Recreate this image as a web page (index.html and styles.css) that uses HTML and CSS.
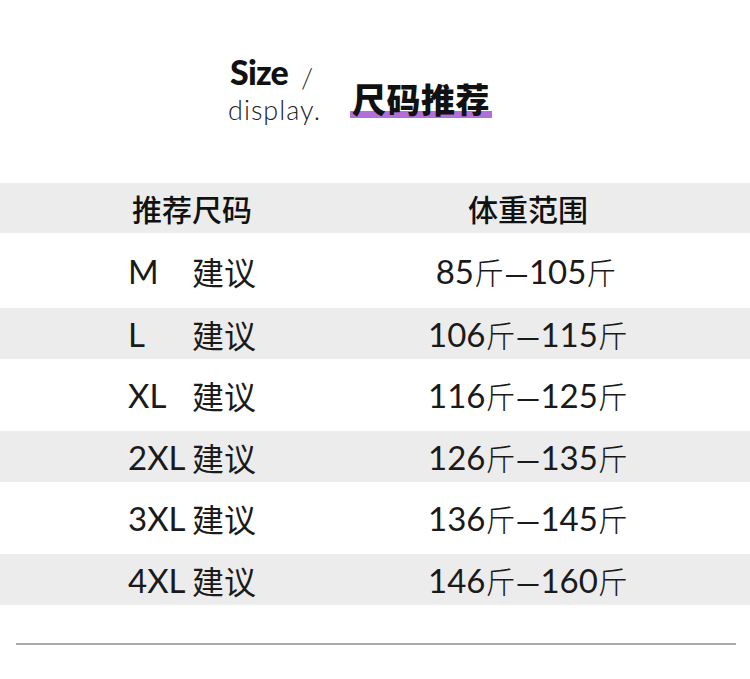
FILE: index.html
```html
<!DOCTYPE html>
<html lang="zh">
<head>
<meta charset="utf-8">
<title>尺码推荐</title>
<link rel="stylesheet" href="styles.css">
</head>
<body>
<div class="page">
  <header class="title">
    <div class="title-en">
      <div class="size">Size<span class="slash">/</span></div>
      <div class="display">display.</div>
    </div>
    <h1 class="title-cn">尺码推荐</h1>
  </header>

  <div class="table">
    <div class="row head">
      <div class="col-left head-cell">推荐尺码</div>
      <div class="col-right head-cell">体重范围</div>
    </div>
    <div class="row white first">
      <div class="col-left"><span class="sz">M</span><span class="cn">建议</span></div>
      <div class="col-right">85<span class="jin">斤</span><span class="dash">—</span>105<span class="jin">斤</span></div>
    </div>
    <div class="row gray">
      <div class="col-left"><span class="sz">L</span><span class="cn">建议</span></div>
      <div class="col-right">106<span class="jin">斤</span><span class="dash">—</span>115<span class="jin">斤</span></div>
    </div>
    <div class="row white">
      <div class="col-left"><span class="sz">XL</span><span class="cn">建议</span></div>
      <div class="col-right">116<span class="jin">斤</span><span class="dash">—</span>125<span class="jin">斤</span></div>
    </div>
    <div class="row gray">
      <div class="col-left"><span class="sz">2XL</span><span class="cn">建议</span></div>
      <div class="col-right">126<span class="jin">斤</span><span class="dash">—</span>135<span class="jin">斤</span></div>
    </div>
    <div class="row white">
      <div class="col-left"><span class="sz">3XL</span><span class="cn">建议</span></div>
      <div class="col-right">136<span class="jin">斤</span><span class="dash">—</span>145<span class="jin">斤</span></div>
    </div>
    <div class="row gray">
      <div class="col-left"><span class="sz">4XL</span><span class="cn">建议</span></div>
      <div class="col-right">146<span class="jin">斤</span><span class="dash">—</span>160<span class="jin">斤</span></div>
    </div>
  </div>

  <div class="rule"></div>
</div>
</body>
</html>
```

FILE: styles.css
```css
html, body {
  margin: 0;
  padding: 0;
  background: #ffffff;
}

.page {
  width: 750px;
  height: 679px;
  overflow: hidden;
  color: #111111;
  font-family: "Lato", "Noto Sans CJK SC", sans-serif;
}

.title {
  display: flex;
  align-items: flex-start;
  padding: 53px 0 0 228px;
  height: 183px;
  box-sizing: border-box;
}

.title-en {
  display: flex;
  flex-direction: column;
  width: 122px;
}

.size {
  padding-left: 2px;
  font-family: "Lato", sans-serif;
  font-weight: 900;
  font-size: 34px;
  line-height: 38px;
  letter-spacing: -0.8px;
  color: #111;
}

.slash {
  font-weight: 300;
  font-size: 28px;
  margin-left: 13px;
  color: #333;
  position: relative;
  top: 3px;
}

.display {
  margin-top: 3px;
  font-family: "Lato", sans-serif;
  font-weight: 300;
  font-size: 27px;
  line-height: 28px;
  color: #222;
  letter-spacing: 1px;
}

.title-cn {
  margin: 29px 0 0 0;
  font-family: "Noto Sans CJK SC", sans-serif;
  font-weight: 900;
  font-size: 34px;
  line-height: 34px;
  letter-spacing: 0.5px;
  color: #111;
  padding: 0 2px 2px 2px;
  background: linear-gradient(#b26fd9, #b26fd9) no-repeat left bottom / 100% 7px;
}

.table {
  display: flex;
  flex-direction: column;
}

.row {
  display: grid;
  grid-template-columns: 128px 300px 1fr;
  align-items: center;
  font-size: 33px;
  font-weight: 400;
  color: #1a1a1a;
}

.row.head {
  height: 50px;
  background: #ececec;
}

.row.white {
  height: 72px;
}

.row.white.first {
  height: 75px;
}

.row.gray {
  height: 51px;
  background: #ececec;
}

.col-left {
  grid-column: 2;
  display: flex;
  align-items: center;
}

.col-right {
  grid-column: 3;
  width: 196px;
  text-align: center;
  white-space: nowrap;
  justify-self: start;
}

.head-cell {
  font-family: "Noto Sans CJK SC", sans-serif;
  font-weight: 500;
  font-size: 30px;
  color: #111;
}

.row.head .col-left {
  padding-left: 4px;
}

.row.head .col-right {
  padding-left: 2px;
}

.sz {
  width: 64px;
  display: inline-block;
}

.cn {
  font-family: "Noto Sans CJK SC", sans-serif;
  font-size: 32px;
  font-weight: 400;
}

.jin {
  font-family: "Noto Sans CJK SC", sans-serif;
  font-size: 30px;
  font-weight: 300;
}

.dash {
  font-family: "Liberation Sans", sans-serif;
  font-size: 21px;
  font-weight: 700;
  margin: 0 2px;
  position: relative;
  top: -3px;
}

.rule {
  margin: 38px 14px 0 16px;
  height: 2px;
  background: #a9a9a9;
}
```
